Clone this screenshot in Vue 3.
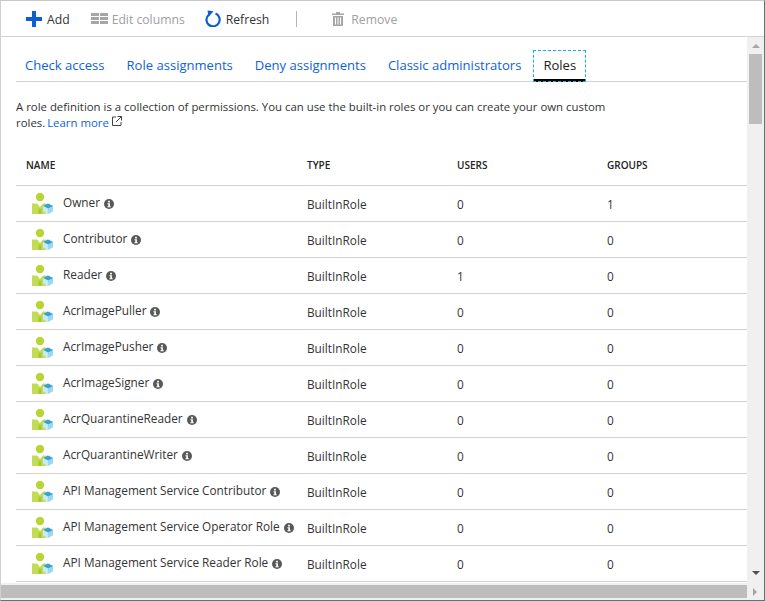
<template>
  <div class="window">
    <div class="toolbar">
      <button class="tool tool-add">
        <svg width="16" height="16" viewBox="0 0 16 16"><path d="M6 0h4v6h6v4h-6v6H6v-6H0V6h6z" fill="#0b5fcf" /></svg>
        <span>Add</span>
      </button>
      <button class="tool tool-off tool-columns">
        <svg width="17" height="11" viewBox="0 0 17 11"><path d="M0 0h8v3H0zM9 0h8v3H9zM0 4h8v3H0zM9 4h8v3H9zM0 8h8v3H0zM9 8h8v3H9z" fill="#a6a6a6" /></svg>
        <span>Edit columns</span>
      </button>
      <button class="tool tool-refresh">
        <svg width="16" height="17" viewBox="0 0 16 17"><path d="M4 4.500A6.600 6.600 0 1 0 10.500 3.600" fill="none" stroke="#0b5fcf" stroke-width="2.200" /><path d="M2.500 .500L8.500 1.200 3.500 7z" fill="#0b5fcf" /></svg>
        <span>Refresh</span>
      </button>
      <div class="tool-sep"></div>
      <button class="tool tool-off tool-remove">
        <svg width="12" height="14" viewBox="0 0 12 14"><path d="M4 0h4v1.500h4V3H0V1.500h4zM1 4h10v10H1zM3 5.500v7h1v-7zM5.500 5.500v7h1v-7zM8 5.500v7h1v-7z" fill="#a6a6a6" fill-rule="evenodd" /></svg>
        <span>Remove</span>
      </button>
    </div>

    <div class="middle">
      <div class="pane">
        <div class="tabs">
          <a v-for="tab in tabs" :key="tab" class="tab" :class="{ active: tab === 'Roles' }">{{ tab }}</a>
        </div>

        <div class="intro">
          <div>A role definition is a collection of permissions. You can use the built-in roles or you can create your own custom</div>
          <div>
            <span>roles.</span> <a class="learn">Learn more</a>
            <svg class="ext" width="10" height="10" viewBox="0 0 10 10"><path d="M4 1H.5v8.500H9V6M5.500.5h4v4M9.500.5L4 6" fill="none" stroke="#444" /></svg>
          </div>
        </div>

        <div class="row head">
          <div>NAME</div>
          <div>TYPE</div>
          <div>USERS</div>
          <div>GROUPS</div>
        </div>
        <div v-for="role in roles" :key="role.name" class="row body">
          <div class="name">
            <svg class="role-ico" width="22" height="22" viewBox="0 0 22 22">
              <circle cx="8" cy="4" r="4.200" fill="#b8d432" />
              <path d="M0 10.500h5l3 3.500 3-3.500h3V21H0z" fill="#c3dc55" />
              <path d="M6.500 21v-6l1.500 1.500L9.500 15v6z" fill="#a5c92f" />
              <path d="M16 10.500l5 2.500v5.500L16 21l-5-2.500V13z" fill="#9fd6f0" />
              <path d="M16 10.500l5 2.500-5 2.500-5-2.500z" fill="#3aa0d0" />
              <path d="M16 15.500V21l-5-2.500V13z" fill="#c9e9f8" />
            </svg>
            <span class="label">{{ role.name }}</span>
            <svg class="info" width="10" height="10" viewBox="0 0 11 11">
              <circle cx="5.500" cy="5.500" r="5.500" fill="#595959" />
              <rect x="4.500" y="2" width="2" height="1.800" fill="#fff" />
              <path d="M3.800 4.600h2.700v3.300h.9v1.100H3.800V7.900h.9V5.700h-.9z" fill="#fff" />
            </svg>
          </div>
          <div>BuiltInRole</div>
          <div>{{ role.users }}</div>
          <div>{{ role.groups }}</div>
        </div>
      </div>

      <div class="vscroll">
        <span class="arrow up"></span>
        <div class="vthumb"></div>
        <div class="vspace"></div>
        <span class="arrow down"></span>
      </div>
    </div>

    <div class="hscroll">
      <div class="hthumb"></div>
      <div class="hend"><span class="arrow right"></span></div>
    </div>
  </div>
</template>

<script setup>
const tabs = ["Check access", "Role assignments", "Deny assignments", "Classic administrators", "Roles"];

const roles = [
  { name: "Owner", users: 0, groups: 1 },
  { name: "Contributor", users: 0, groups: 0 },
  { name: "Reader", users: 1, groups: 0 },
  { name: "AcrImagePuller", users: 0, groups: 0 },
  { name: "AcrImagePusher", users: 0, groups: 0 },
  { name: "AcrImageSigner", users: 0, groups: 0 },
  { name: "AcrQuarantineReader", users: 0, groups: 0 },
  { name: "AcrQuarantineWriter", users: 0, groups: 0 },
  { name: "API Management Service Contributor", users: 0, groups: 0 },
  { name: "API Management Service Operator Role", users: 0, groups: 0 },
  { name: "API Management Service Reader Role", users: 0, groups: 0 },
];
</script>

<style>
html,
body {
  margin: 0;
  background: #fff;
}
</style>

<style scoped>
.window {
  width: 765px;
  height: 601px;
  box-sizing: border-box;
  border-top: 1px solid #c8c8c8;
  border-left: 1px solid #d0d0d0;
  border-right: 1px solid #6e6e6e;
  border-bottom: 1px solid #6e6e6e;
  display: flex;
  flex-direction: column;
  overflow: hidden;
  font-family: "Open Sans", "Noto Sans", sans-serif;
  font-size: 12px;
  color: #333;
}

/* toolbar */
.toolbar {
  height: 35px;
  flex-shrink: 0;
  border-bottom: 1px solid #d2d2d2;
  display: flex;
  align-items: center;
  padding-left: 25px;
}
.tool {
  display: flex;
  align-items: center;
  gap: 5px;
  border: 0;
  padding: 0;
  background: none;
  font: inherit;
  font-size: 12.200px;
  color: #333;
}
.tool span {
  padding-top: 2px;
}
.tool-off {
  color: #a0a0a0;
}
.tool-columns {
  margin-left: 21px;
  gap: 4px;
}
.tool-refresh {
  margin-left: 20px;
}
.tool-sep {
  width: 1px;
  height: 16px;
  background: #b4b4b4;
  margin-left: 27px;
}
.tool-remove {
  margin-left: 35px;
  gap: 7px;
}

.middle {
  flex: 1;
  min-height: 0;
  display: flex;
}
.pane {
  flex: 1;
  min-width: 0;
  padding: 12px 0 0 15px;
  overflow: hidden;
}

/* tabs */
.tabs {
  display: flex;
  height: 32px;
  border-bottom: 1px solid #d2d2d2;
  gap: 22px;
  padding-left: 9px;
}
.tab {
  color: #0f62d8;
  font-size: 13.050px;
  line-height: 32px;
  height: 32px;
}
.tab.active {
  color: #222;
  padding: 0 10px;
  margin-left: -10px;
  margin-top: 1px;
  line-height: 30px;
  height: 32px;
  box-sizing: border-box;
  outline: 1px dashed #12b2e6;
  outline-offset: -1px;
  box-shadow: inset 0 -3px 0 #000;
}

.intro {
  margin: 17px 0 0;
  width: 610px;
  line-height: 16px;
  font-size: 11.400px;
  color: #333;
  white-space: nowrap;
}
.learn {
  color: #0f62d8;
  margin-left: -1px;
}
.ext {
  margin-left: 3px;
  vertical-align: 1px;
}

/* table */
.row {
  display: grid;
  grid-template-columns: 281px 150px 150px 140px;
  padding-left: 10px;
  align-items: center;
  border-bottom: 1px solid #d2d2d2;
}
.head {
  height: 37px;
  padding-bottom: 2px;
  margin-top: 15px;
  font-size: 10px;
  font-weight: 600;
  color: #222;
}
.body {
  height: 35px;
  font-size: 11.800px;
}
.name {
  display: flex;
  align-items: center;
  gap: 4px;
  margin-top: -4px;
}
.role-ico {
  margin-left: 6px;
  margin-right: 5px;
  flex-shrink: 0;
  position: relative;
  top: 2px;
}
.info {
  position: relative;
  top: 2.500px;
}

/* scrollbars */
.vscroll {
  width: 17px;
  flex-shrink: 0;
  background: #f0f0f0;
  display: flex;
  flex-direction: column;
  align-items: center;
}
.vthumb {
  width: 13px;
  height: 70px;
  background: #bdbdbd;
  margin-top: 6px;
}
.vspace {
  flex: 1;
}
.arrow {
  display: block;
  width: 0;
  height: 0;
}
.up {
  margin-top: 7px;
  border-left: 4px solid transparent;
  border-right: 4px solid transparent;
  border-bottom: 4px solid #a6a6a6;
}
.down {
  margin-bottom: 8px;
  border-left: 4px solid transparent;
  border-right: 4px solid transparent;
  border-top: 4px solid #505050;
}
.hscroll {
  height: 17px;
  flex-shrink: 0;
  display: flex;
  background: #f0f0f0;
}
.hthumb {
  flex: 1;
  background: #bdbdbd;
  margin: 2px 0;
}
.hend {
  width: 17px;
  display: flex;
  align-items: center;
  justify-content: center;
}
.right {
  border-top: 4px solid transparent;
  border-bottom: 4px solid transparent;
  border-left: 4px solid #a6a6a6;
  margin-left: -2px;
}
</style>
